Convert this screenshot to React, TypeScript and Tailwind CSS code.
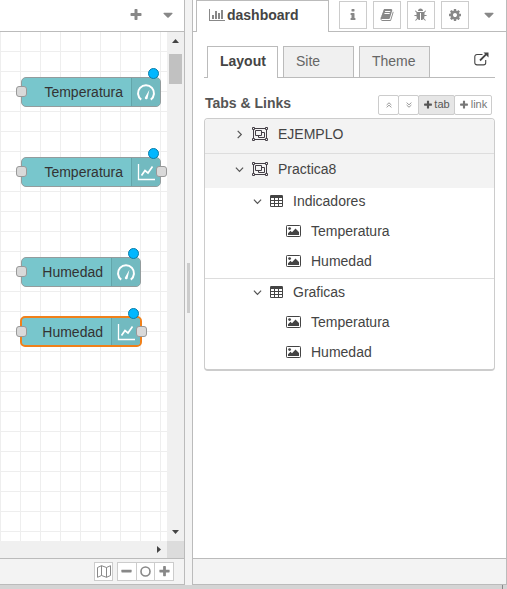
import React from "react";

const PATHS = {
  plus: "M1600 736v192q0 40-28 68t-68 28h-416v416q0 40-28 68t-68 28h-192q-40 0-68-28t-28-68v-416h-416q-40 0-68-28t-28-68v-192q0-40 28-68t68-28h416v-416q0-40 28-68t68-28h192q40 0 68 28t28 68v416h416q40 0 68 28t28 68z",
  minus: "M1600 736v192q0 40-28 68t-68 28h-1216q-40 0-68-28t-28-68v-192q0-40 28-68t68-28h1216q40 0 68 28t28 68z",
  caret: "M1408 704q0 26-19 45l-448 448q-19 19-45 19t-45-19l-448-448q-19-19-19-45t19-45 45-19h896q26 0 45 19t19 45z",
  info: "M1216 1344v128q0 26-19 45t-45 19h-512q-26 0-45-19t-19-45v-128q0-26 19-45t45-19h64v-384h-64q-26 0-45-19t-19-45v-128q0-26 19-45t45-19h384q26 0 45 19t19 45v576h64q26 0 45 19t19 45zm-128-1152v192q0 26-19 45t-45 19h-256q-26 0-45-19t-19-45v-192q0-26 19-45t45-19h256q26 0 45 19t19 45z",
  cog: "M1152 896q0-106-75-181t-181-75-181 75-75 181 75 181 181 75 181-75 75-181zm512-109v222q0 12-8 23t-20 13l-185 28q-19 54-39 91 35 50 107 138 10 12 10 25t-9 23q-27 37-99 108t-94 71q-12 0-26-9l-138-108q-44 23-91 38-16 136-29 186-7 28-36 28h-222q-14 0-24.5-8.5t-11.5-21.5l-28-184q-49-16-90-37l-141 107q-10 9-25 9-14 0-25-11-126-114-165-168-7-10-7-23 0-12 8-23 15-21 51-66.5t54-70.5q-27-50-41-99l-183-27q-13-2-21-12.5t-8-23.5v-222q0-12 8-23t19-13l186-28q14-46 39-92-40-57-107-138-10-12-10-24 0-10 9-23 26-36 98.5-107.5t94.5-71.5q13 0 26 10l138 107q44-23 91-38 16-136 29-186 7-28 36-28h222q14 0 24.5 8.5t11.5 21.5l28 184q49 16 90 37l142-107q9-9 24-9 13 0 25 10 129 119 165 170 7 8 7 22 0 12-8 23-15 21-51 66.5t-54 70.5q26 50 41 98l183 28q13 2 21 12.5t8 23.5z",
  book: "M1703 478q40 57 18 129l-275 906q-19 64-76.5 107.5t-122.5 43.5h-923q-77 0-148.5-53.5t-99.5-131.5q-24-67-2-127 0-4 3-27t4-37q1-8-3-21.5t-3-19.5q2-11 8-21t16.5-23.5 16.5-23.5q23-38 45-91.5t30-91.5q3-10 .5-30t-.5-28q3-11 17-28t17-23q21-36 42-92t25-90q1-9-2.5-32t.5-28q4-13 22-30.5t22-22.5q19-26 42.5-84.5t27.5-96.5q1-8-3-25.5t-2-26.5q2-8 9-18t18-23 17-21q8-12 16.5-30.5t15-35 16-36 19.5-32 26.5-23.5 36-11.5 47.5 5.5l-1 3q38-9 51-9h761q74 0 114 56t18 130l-274 906q-36 119-71.5 153.5t-128.5 34.5h-869q-27 0-38 15-11 16-1 43 24 70 144 70h923q29 0 56-15.5t35-41.5l300-987q7-22 5-57 38 15 59 43zm-1064 2q-4 13 2 22.5t20 9.5h608q13 0 25.5-9.5t16.5-22.5l21-64q4-13-2-22.5t-20-9.5h-608q-13 0-25.5 9.5t-16.5 22.5zm-83 256q-4 13 2 22.5t20 9.5h608q13 0 25.5-9.5t16.5-22.5l21-64q4-13-2-22.5t-20-9.5h-608q-13 0-25.5 9.5t-16.5 22.5z",
  bug: "M1632 960q0 26-19 45t-45 19h-224q0 171-67 290l208 209q19 19 19 45t-19 45q-18 19-45 19t-45-19l-198-197q-5 5-15 13t-42 28.5-65 36.5-82 29-97 13v-896h-128v896q-51 0-101.5-13.5t-87-33-66-39-43.5-32.5l-15-14-183 207q-20 21-48 21-24 0-43-16-19-18-20.5-44.5t15.5-46.5l202-227q-58-114-58-274h-224q-26 0-45-19t-19-45 19-45 45-19h224v-294l-173-173q-19-19-19-45t19-45 45-19 45 19l173 173h844l173-173q19-19 45-19t45 19 19 45-19 45l-173 173v294h224q26 0 45 19t19 45zm-480-576h-640q0-133 93.5-226.5t226.5-93.5 226.5 93.5 93.5 226.5z",
};

function Glyph({ name, size = 14, className = "" }: { name: keyof typeof PATHS; size?: number; className?: string }) {
  return (
    <svg width={size} height={size} viewBox="0 0 1792 1792" fill="currentColor" className={`shrink-0 ${className}`}>
      <path d={PATHS[name]} />
    </svg>
  );
}

function BarChart() {
  return (
    <svg width="16" height="14" viewBox="0 0 16 14" fill="#888" className="shrink-0">
      <path d="M0 1h1v11h15v1H0zM3 7h2v4H3zM6 3h2v8H6zM9 5h2v6H9zM12 2h2v9h-2z" />
    </svg>
  );
}

function ExternalLink() {
  return (
    <svg width="15" height="14" viewBox="0 0 15 14" fill="none" stroke="#444" className="shrink-0">
      <path d="M8.5 2.5H3a2.2 2.2 0 0 0-2.2 2.2v6A2.2 2.2 0 0 0 3 12.900h6.500a2.200 2.200 0 0 0 2.200-2.200V8" strokeWidth="1.100" />
      <path d="M6 8.500L12.300 2.200" strokeWidth="1.800" />
      <path d="M9.500.500h5v5z" fill="#444" stroke="none" />
    </svg>
  );
}

function ObjectGroup() {
  return (
    <svg width="16" height="14" viewBox="0 0 16 14" fill="none" stroke="#443f46" className="shrink-0">
      <path d="M2.500 1.500h11M2.500 12.500h11M1.500 2.500v9M14.500 2.500v9" />
      <path d="M.500.500h2v2h-2zM13.500.500h2v2h-2zM.500 11.500h2v2h-2zM13.500 11.500h2v2h-2z" />
      <path d="M3.500 3.500h6v5h-6zM9.500 5.500h3v5h-6v-2" />
    </svg>
  );
}

function Table() {
  return (
    <svg width="13" height="12" viewBox="0 0 13 12" className="shrink-0">
      <rect width="13" height="12" rx="1.200" fill="#444" />
      <path d="M1 3h3v2H1zM5 3h3v2H5zM9 3h3v2H9zM1 6h3v2H1zM5 6h3v2H5zM9 6h3v2H9zM1 9h3v2H1zM5 9h3v2H5zM9 9h3v2H9z" fill="#fff" />
    </svg>
  );
}

function Picture() {
  return (
    <svg width="15" height="12" viewBox="0 0 15 12" className="shrink-0">
      <rect x=".5" y=".5" width="14" height="11" rx=".8" fill="#fff" stroke="#444" />
      <circle cx="3.600" cy="3.600" r="1.400" fill="#444" />
      <path d="M2 10V8.200L4.500 5.800 6 7.200 9.500 3.500 13 7v3z" fill="#444" />
    </svg>
  );
}

function Chevron({ open }: { open?: boolean }) {
  return (
    <svg width="9" height="9" viewBox="0 0 9 9" fill="none" stroke="#555" strokeWidth="1.200" className="shrink-0">
      {open ? <path d="M.900 2.700L4.500 6.300 8.100 2.700" /> : <path d="M2.700.900L6.300 4.500 2.700 8.100" />}
    </svg>
  );
}

function DoubleChevron({ down }: { down?: boolean }) {
  return (
    <svg width="6" height="6" viewBox="0 0 7 7" fill="none" stroke="#888" strokeWidth="1" className="shrink-0">
      {down ? <path d="M.700.700L3.500 3.300 6.300.700M.700 3.500L3.500 6.100 6.300 3.500" /> : <path d="M.700 3.500L3.500.900 6.300 3.500M.700 6.300L3.500 3.700 6.300 6.300" />}
    </svg>
  );
}

function MapIcon() {
  return (
    <svg width="14" height="13" viewBox="0 0 14 13" fill="none" stroke="#888" className="shrink-0">
      <path d="M.500 2.500L4.500.700l5 1.800 4-1.800v9.800l-4 1.800-5-1.800-4 1.800zM4.500.700v9.800M9.500 2.500v9.800" />
    </svg>
  );
}

function Gauge() {
  return (
    <svg width="20" height="20" viewBox="0 0 20 20" fill="none" className="mt-px shrink-0">
      <path d="M5.200 16.600A8 8 0 1 1 14.800 16.600" stroke="#fff" strokeWidth="2" />
      <path d="M13.400 6.800L8.800 14.800a1.500 1.500 0 0 0 2.700.900z" fill="#fff" />
    </svg>
  );
}

function LineChart() {
  return (
    <svg width="18" height="18" viewBox="0 0 18 18" fill="none" stroke="#fff" className="shrink-0">
      <path d="M1.500 1v15.500H18" strokeWidth="1.300" />
      <path d="M4.500 12.500L8 7.500l3 2.500 4.500-6.500" strokeWidth="1.700" />
    </svg>
  );
}

function Port({ className }: { className: string }) {
  return <span className={`absolute h-[11px] w-[11px] rounded-[3px] border border-[#999] bg-[#d9d9d9] ${className}`} />;
}

type NodeProps = { label: string; place: string; chart?: boolean; selected?: boolean };

function FlowNode({ label, place, chart, selected }: NodeProps) {
  return (
    <div className={`absolute ${selected ? "left-[20px] h-[31px]" : "left-[21px] h-[30px]"} ${place}`}>
      <div className={`flex h-full overflow-hidden rounded-[5px] bg-[#78c6cc] ${selected ? "border-2 border-[#f0801a]" : "border border-[#939c9d]"}`}>
        <div className="flex flex-1 items-center justify-end pr-[8px] text-[#333]">{label}</div>
        <div className="flex w-[29px] items-center justify-center border-l border-[#62a5aa] bg-[#72bac0]">
          {chart ? <LineChart /> : <Gauge />}
        </div>
      </div>
      <Port className={selected ? "top-[10px] -left-[4.5px]" : "top-[9px] -left-[5.5px]"} />
      {chart && <Port className={selected ? "top-[10px] -right-[5px]" : "top-[9px] -right-[6px]"} />}
      <span className={`absolute h-[11px] w-[11px] rounded-full border border-[#087da9] bg-[#00b7ff] ${selected ? "-top-[8px] right-[3px]" : "-top-[9px] right-[2px]"}`} />
    </div>
  );
}

function Workspace() {
  return (
    <section className="flex h-[585px] w-[185px] shrink-0 flex-col border-r border-b border-[#bbb] bg-white">
      <header className="flex h-[32px] shrink-0 items-center border-b border-[#bbb] pb-[2px] text-[#888]">
        <Glyph name="plus" className="ml-[129px]" />
        <Glyph name="caret" size={16} className="ml-[17px]" />
      </header>
      <div className="flex h-[509px] shrink-0">
        <div className="relative w-[167px] overflow-hidden bg-[linear-gradient(to_right,#eee_1px,transparent_1px),linear-gradient(to_bottom,#eee_1px,transparent_1px)] bg-[size:20px_20px] bg-[position:0px_19px]">
          <FlowNode label="Temperatura" place="top-[45px] w-[140px]" />
          <FlowNode label="Temperatura" place="top-[125px] w-[140px]" chart />
          <FlowNode label="Humedad" place="top-[225px] w-[120px]" />
          <FlowNode label="Humedad" place="top-[284px] w-[122px]" chart selected />
        </div>
        <div className="flex w-[17px] flex-col items-center bg-[#f0f0f0]">
          <svg width="7" height="4" viewBox="0 0 7 4" className="mt-[7px] shrink-0"><path d="M0 4L3.500 0 7 4z" fill="#444" /></svg>
          <span className="mt-[11px] h-[30px] w-[13px] bg-[#c1c1c1]" />
          <svg width="7" height="4" viewBox="0 0 7 4" className="mt-auto mb-[7px] shrink-0"><path d="M0 0h7L3.500 4z" fill="#444" /></svg>
        </div>
      </div>
      <div className="flex h-[17px] shrink-0 items-center bg-[#f0f0f0]">
        <svg width="4" height="7" viewBox="0 0 4 7" className="ml-[157px]"><path d="M0 0l4 3.500L0 7z" fill="#444" /></svg>
        <span className="ml-auto h-[17px] w-[17px] bg-[#dcdcdc]" />
      </div>
      <footer className="flex flex-1 items-center justify-end border-t border-[#bbb] bg-[#f3f3f3] pr-[10px] text-[#888]">
        <span className="mr-[4px] flex h-[19px] w-[19px] items-center justify-center border border-[#ccc] bg-white"><MapIcon /></span>
        <span className="flex h-[19px] w-[57px] divide-x divide-[#ccc] border border-[#ccc] bg-white">
          <span className="flex flex-1 items-center justify-center"><Glyph name="minus" size={13} /></span>
          <span className="flex flex-1 items-center justify-center"><svg width="11" height="11"><circle cx="5.500" cy="5.500" r="4.500" fill="none" stroke="#888" strokeWidth="1.600" /></svg></span>
          <span className="flex flex-1 items-center justify-center"><Glyph name="plus" size={13} /></span>
        </span>
      </footer>
    </section>
  );
}

function IconTab({ name, size }: { name: keyof typeof PATHS; size?: number }) {
  return (
    <span className="mr-[6px] flex h-[28px] w-[28px] shrink-0 items-center justify-center border border-[#ccc] bg-white">
      <Glyph name={name} size={size} />
    </span>
  );
}

function SidebarTabs() {
  return (
    <header className="flex h-[32px] shrink-0 text-[#888]">
      <span className="w-[3px] border-b border-[#bbb]" />
      <div className="flex w-[133px] items-center border-x border-t border-[#bbb] pb-[3px] pl-[12px] font-bold text-[#444]">
        <BarChart />
        <span className="ml-[2px]">dashboard</span>
      </div>
      <div className="flex flex-1 items-start border-b border-[#bbb] pt-[1px] pl-[10px]">
        <IconTab name="info" />
        <IconTab name="book" />
        <IconTab name="bug" />
        <IconTab name="cog" />
        <Glyph name="caret" size={16} className="mt-[6px] ml-[6px]" />
      </div>
    </header>
  );
}

function LayoutTabs() {
  return (
    <nav className="mt-[14px] flex h-[32px] shrink-0 text-[#666]">
      <span className="w-[3px] border-b border-[#bbb]" />
      <span className="flex w-[71px] items-center border-x border-t border-[#bbb] pb-[3px] pl-[12px] font-bold text-[#444]">Layout</span>
      <span className="w-[5px] border-b border-[#bbb]" />
      <span className="flex w-[71px] items-center border border-[#bbb] bg-[#f0f0f0] pb-[2px] pl-[12px]">Site</span>
      <span className="w-[5px] border-b border-[#bbb]" />
      <span className="flex w-[71px] items-center border border-[#bbb] bg-[#f0f0f0] pb-[2px] pl-[12px]">Theme</span>
      <span className="flex flex-1 items-start justify-end border-b border-[#bbb] pt-[6px] pr-[6px]"><ExternalLink /></span>
    </nav>
  );
}

function WidgetRow({ label }: { label: string }) {
  return (
    <div className="flex h-[30px] items-center pl-[81px]">
      <Picture />
      <span className="ml-[10px]">{label}</span>
    </div>
  );
}

function GroupRow({ label }: { label: string }) {
  return (
    <div className="flex h-[30px] items-center pl-[48px]">
      <Chevron open />
      <span className="ml-[8px] flex"><Table /></span>
      <span className="ml-[10px]">{label}</span>
    </div>
  );
}

function TabRow({ label, open }: { label: string; open?: boolean }) {
  return (
    <div className="flex h-[34px] items-center bg-[#f3f3f3] pb-[4px] pl-[30px]">
      <Chevron open={open} />
      <span className="ml-[8px] flex"><ObjectGroup /></span>
      <span className="ml-[10px]">{label}</span>
    </div>
  );
}

function Sidebar() {
  return (
    <aside className="flex h-[585px] w-[315px] shrink-0 flex-col border-x border-b border-[#bbb] bg-white">
      <SidebarTabs />
      <div className="flex flex-1 flex-col pr-[11px] pl-[11px]">
        <LayoutTabs />
        <div className="mt-[16px] flex h-[21px] shrink-0 items-center justify-between pr-[3px] pl-px">
          <span className="pb-[3px] font-bold text-[#555]">Tabs &amp; Links</span>
          <div className="flex h-[20px] -space-x-px text-[11px] leading-none text-[#777]">
            <span className="flex w-[21px] items-center justify-center rounded-[2px] border border-[#ccc]"><DoubleChevron /></span>
            <span className="flex w-[21px] items-center justify-center rounded-[2px] border border-[#ccc]"><DoubleChevron down /></span>
            <span className="flex w-[37px] items-center justify-center gap-px rounded-[2px] border border-[#ccc] bg-[#e6e6e6] text-[#555]"><Glyph name="plus" size={10} />tab</span>
            <span className="flex w-[38px] items-center justify-center gap-[2px] rounded-[2px] border border-[#ccc]"><Glyph name="plus" size={10} />link</span>
          </div>
        </div>
        <div className="mt-[3px] h-[253px] shrink-0 overflow-hidden rounded-[4px] border border-b-2 border-[#ccc] text-[#444]">
          <TabRow label="EJEMPLO" />
          <div className="border-t border-[#ddd]"><TabRow label="Practica8" open /></div>
          <div className="-mt-[2px]">
            <GroupRow label="Indicadores" />
            <WidgetRow label="Temperatura" />
            <WidgetRow label="Humedad" />
          </div>
          <div className="mt-[2px] border-t border-[#ddd] -mb-px">
            <div className="-mt-[2px]"><GroupRow label="Graficas" /></div>
            <WidgetRow label="Temperatura" />
            <WidgetRow label="Humedad" />
          </div>
        </div>
      </div>
      <footer className="h-[26px] shrink-0 border-t border-[#bbb] bg-[#f3f3f3]" />
    </aside>
  );
}

export default function App() {
  return (
    <main className="flex h-[589px] w-[507px] flex-col overflow-hidden bg-[#d4d4d4] font-['Liberation_Sans',Arial,sans-serif] text-[14px] leading-[20px]">
      <div className="flex">
        <Workspace />
        <div className="flex h-[585px] w-[7px] shrink-0 justify-center bg-[#f3f3f3] pt-[263px]">
          <span className="h-[50px] w-[3px] bg-[#ccc]" />
        </div>
        <Sidebar />
      </div>
      <span className="ml-[502px] h-[4px] w-px bg-[#888]" />
    </main>
  );
}
